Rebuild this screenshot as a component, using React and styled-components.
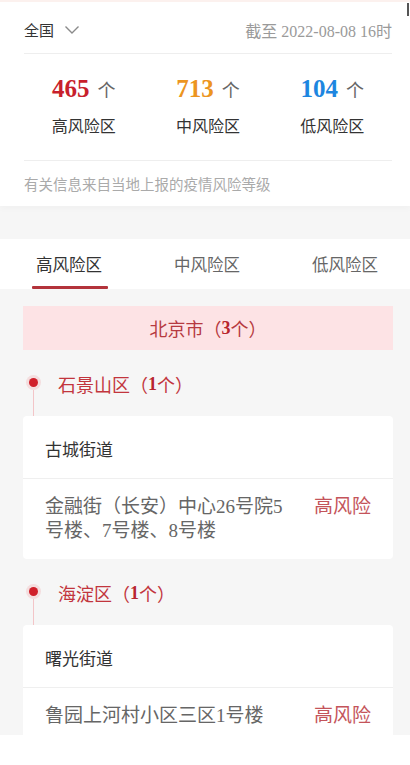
import React from "react";
import styled, { createGlobalStyle } from "styled-components";

const Global = createGlobalStyle`
  html, body { margin: 0; padding: 0; background: #fff; }
  body { font-family: "Liberation Serif", "Noto Sans CJK SC", serif; }
  * { box-sizing: border-box; }
`;

const Page = styled.div`
  position: relative;
  width: 410px;
  height: 735px;
  overflow: hidden;
  background: #f6f6f6;
`;

const ScrollThumb = styled.div`
  position: absolute;
  top: 3px;
  right: 1px;
  width: 2px;
  height: 13px;
  background: #555;
`;

const Summary = styled.section`
  background: #fff;
  border-top: 2px solid #fcf1ee;
  padding: 0 18px 0 24px;
  box-shadow: 0 3px 6px rgba(0, 0, 0, 0.025);
`;

const HeaderRow = styled.div`
  display: flex;
  align-items: center;
  justify-content: space-between;
  height: 52px;
  padding-top: 4px;
  border-bottom: 1px solid #eeeeee;
`;

const Region = styled.div`
  display: flex;
  align-items: center;
  gap: 10px;
  font-size: 15px;
  color: #333;
`;

const DateText = styled.div`
  font-size: 16px;
  color: #9a9a9a;
`;

const Stats = styled.div`
  display: grid;
  grid-template-columns: repeat(3, 1fr);
  padding: 20px 0 22px;
  border-bottom: 1px solid #eeeeee;
`;

const Stat = styled.div`
  display: flex;
  flex-direction: column;
  align-items: center;
  gap: 12px;
  margin-left: ${(p) => p.$shift || 0}px;
`;

const Count = styled.div`
  display: flex;
  align-items: baseline;
  gap: 8px;
  height: 30px;
  line-height: 30px;
`;

const Num = styled.span`
  font-size: 25px;
  font-weight: bold;
  color: ${(p) => p.$color};
`;

const Unit = styled.span`
  font-size: 18px;
  color: #666;
`;

const StatLabel = styled.div`
  font-size: 16px;
  line-height: 22px;
  color: #333;
`;

const Note = styled.div`
  height: 45px;
  display: flex;
  align-items: center;
  font-size: 14.5px;
  color: #aaaaaa;
`;

const Tabs = styled.nav`
  margin-top: 33px;
  height: 50px;
  background: #fff;
  display: grid;
  grid-template-columns: repeat(3, 138px);
`;

const Tab = styled.div`
  position: relative;
  display: flex;
  align-items: center;
  justify-content: center;
  font-size: 16.5px;
  color: ${(p) => (p.$active ? "#333" : "#666")};
  &::after {
    content: "";
    display: ${(p) => (p.$active ? "block" : "none")};
    position: absolute;
    bottom: 0;
    left: 32px;
    width: 76px;
    height: 3px;
    background: #b3333b;
    border-radius: 1px;
  }
`;

const Content = styled.div`
  padding: 17px 17px 0 23px;
`;

const Banner = styled.div`
  height: 44px;
  background: #fde3e5;
  display: flex;
  align-items: center;
  justify-content: center;
  font-size: 18px;
  color: #b63a40;
`;

const Bold = styled.b`
  font-weight: bold;
  color: #b8252e;
`;

const District = styled.div`
  position: relative;
  display: flex;
  align-items: center;
  height: 66px;
  padding: 2px 0 0 35px;
  font-size: 18px;
  color: #c2353d;
  &::before {
    content: "";
    position: absolute;
    left: 6px;
    top: 28px;
    width: 9px;
    height: 9px;
    border-radius: 50%;
    background: #d0202b;
    box-shadow: 0 0 0 3px rgba(230, 60, 70, 0.13);
  }
  &::after {
    content: "";
    position: absolute;
    left: 10px;
    top: 40px;
    width: 1px;
    bottom: 0;
    background: #f3c5c8;
  }
`;

const Card = styled.div`
  background: #fff;
  border-radius: 4px;
  overflow: hidden;
`;

const Street = styled.div`
  height: 63px;
  padding: 2px 22px 0;
  display: flex;
  align-items: center;
  font-size: 17px;
  color: #333;
  border-bottom: 1px solid #efefef;
`;

const Place = styled.div`
  display: flex;
  align-items: center;
  justify-content: space-between;
  padding: 16px 22px;
  min-height: 56px;
`;

const Address = styled.div`
  max-width: 248px;
  font-size: 19px;
  line-height: 24px;
  color: #666;
`;

const Level = styled.div`
  flex: none;
  align-self: flex-start;
  font-size: 19px;
  line-height: 24px;
  color: #c4545a;
`;

const Chevron = () => (
  <svg width="16" height="10" viewBox="0 0 16 10" fill="none">
    <polyline points="1.5,1.5 8,8 14.5,1.5" stroke="#8a8a8a" strokeWidth="1.4" />
  </svg>
);

const data = [
  {
    name: "石景山区",
    count: 1,
    street: "古城街道",
    address: "金融街（长安）中心26号院5号楼、7号楼、8号楼",
  },
  {
    name: "海淀区",
    count: 1,
    street: "曙光街道",
    address: "鲁园上河村小区三区1号楼",
  },
];

export default function App() {
  return (
    <>
      <Global />
      <Page>
        <ScrollThumb />
        <Summary>
          <HeaderRow>
            <Region>
              全国 <Chevron />
            </Region>
            <DateText>截至 2022-08-08 16时</DateText>
          </HeaderRow>
          <Stats>
            <Stat $shift={-3}>
              <Count>
                <Num $color="#c81f2c">465</Num>
                <Unit>个</Unit>
              </Count>
              <StatLabel>高风险区</StatLabel>
            </Stat>
            <Stat>
              <Count>
                <Num $color="#ec951f">713</Num>
                <Unit>个</Unit>
              </Count>
              <StatLabel>中风险区</StatLabel>
            </Stat>
            <Stat $shift={3}>
              <Count>
                <Num $color="#1d86e0">104</Num>
                <Unit>个</Unit>
              </Count>
              <StatLabel>低风险区</StatLabel>
            </Stat>
          </Stats>
          <Note>有关信息来自当地上报的疫情风险等级</Note>
        </Summary>
        <Tabs>
          <Tab $active>高风险区</Tab>
          <Tab>中风险区</Tab>
          <Tab>低风险区</Tab>
        </Tabs>
        <Content>
          <Banner>
            北京市（<Bold>3</Bold>个）
          </Banner>
          {data.map((d) => (
            <React.Fragment key={d.name}>
              <District>
                {d.name}（<Bold>{d.count}</Bold>个）
              </District>
              <Card>
                <Street>{d.street}</Street>
                <Place>
                  <Address>{d.address}</Address>
                  <Level>高风险</Level>
                </Place>
              </Card>
            </React.Fragment>
          ))}
        </Content>
      </Page>
    </>
  );
}
